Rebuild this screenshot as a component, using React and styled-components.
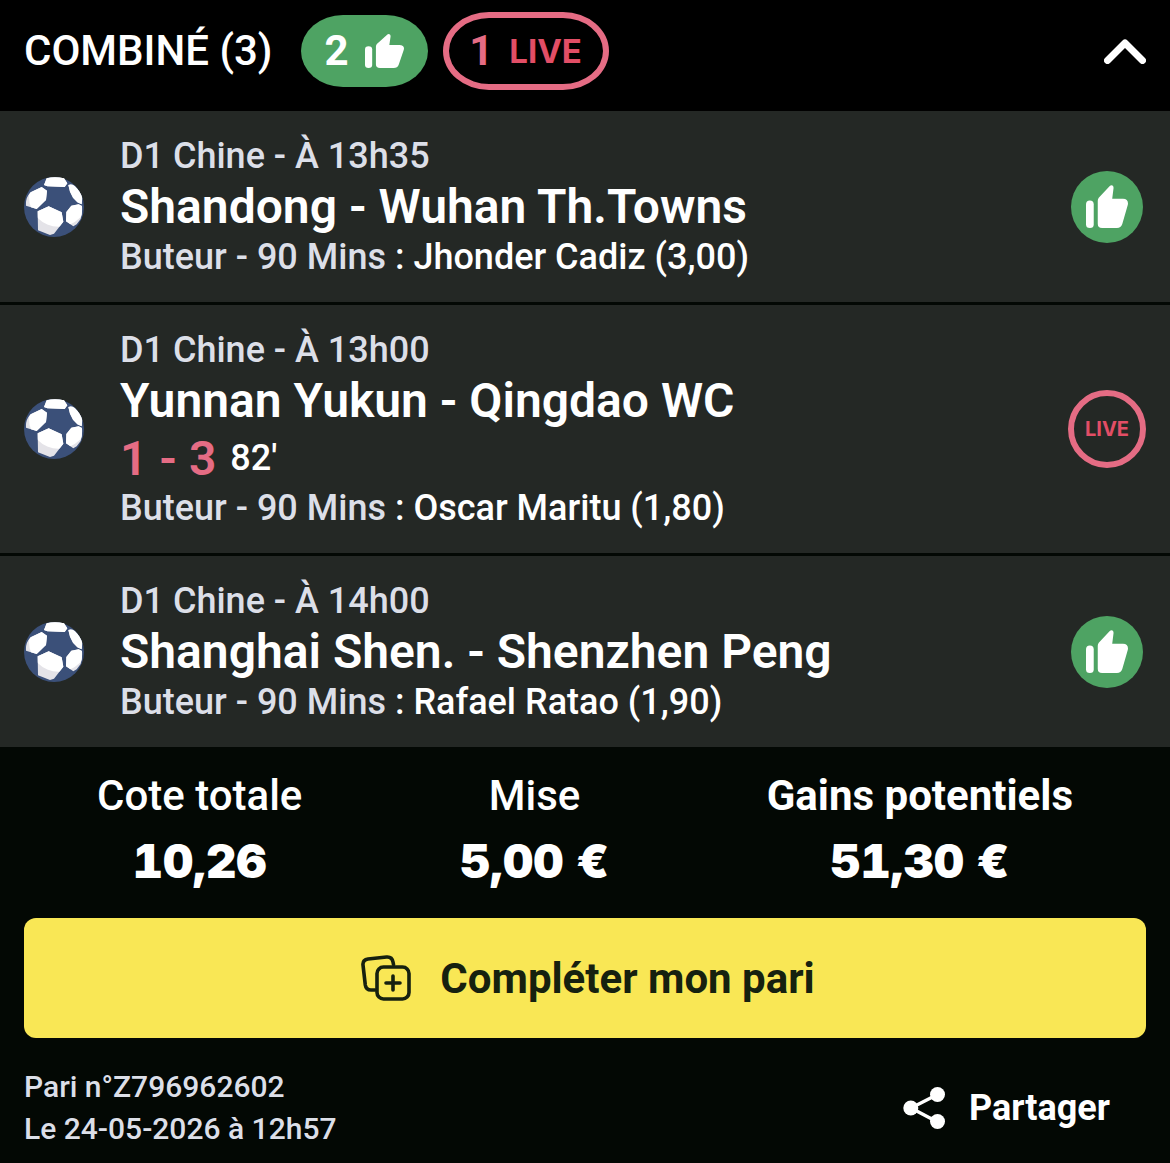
import React from "react";
import styled, { createGlobalStyle } from "styled-components";

const GlobalStyle = createGlobalStyle`
  * {
    box-sizing: border-box;
  }
  body {
    margin: 0;
    background: #030804;
    color: #fff;
    font-family: Roboto, "Liberation Sans", sans-serif;
  }
  button {
    border: 0;
    padding: 0;
    background: none;
    color: inherit;
    font-family: inherit;
    cursor: pointer;
  }
  h1, h2, p, ul, dl, dd {
    margin: 0;
    padding: 0;
  }
  svg {
    display: block;
    flex-shrink: 0;
  }
`;

const Header = styled.header`
  display: flex;
  align-items: center;
  height: 111px;
  padding: 0 24px 10px;
  background: #000;
`;

const Heading = styled.h1`
  margin-right: 28px;
  font-size: 42px;
  font-weight: 500;
  line-height: 48px;
`;

const Pill = styled.span`
  display: flex;
  align-items: center;
  justify-content: center;
  font-size: 42px;
  font-weight: 700;
`;

const WonPill = styled(Pill)`
  gap: 16px;
  width: 127px;
  height: 72px;
  margin-right: 15px;
  border-radius: 42px / 36px;
  background: #4ea363;
`;

const LivePill = styled(Pill)`
  gap: 16px;
  width: 166px;
  height: 78px;
  border: 6px solid #e56c84;
  border-radius: 46px / 39px;
  color: #e56c84;
`;

const LiveText = styled.span`
  color: #e24e66;
  font-family: Inter, sans-serif;
  font-size: ${({ $small }) => ($small ? "20px" : "33px")};
  font-weight: 700;
`;

const Toggle = styled.button`
  margin-left: auto;
`;

const BetList = styled.ul`
  display: grid;
  gap: 3px;
  list-style: none;
`;

const BetRow = styled.li`
  display: flex;
  align-items: center;
  padding: 24px;
  background: #242825;
`;

const BetInfo = styled.div`
  flex: 1;
  margin-left: 36px;
`;

const Meta = styled.p`
  color: #dcdfe8;
  font-size: 36px;
  font-weight: 500;
  line-height: 42px;
`;

const Pick = styled.span`
  color: #fff;
`;

const Teams = styled.h2`
  font-size: 48px;
  font-weight: 600;
  line-height: 59px;
`;

const Score = styled.p`
  display: flex;
  align-items: center;
  gap: 14px;
  font-size: 36px;
  font-weight: 500;
  line-height: 57px;

  strong {
    color: #e56c84;
    font-size: 48px;
    font-weight: 600;
  }
`;

const StatusSlot = styled.div`
  display: flex;
  justify-content: center;
  width: 78px;
`;

const Badge = styled.span`
  display: flex;
  align-items: center;
  justify-content: center;
  width: ${({ $live }) => ($live ? "78px" : "72px")};
  height: ${({ $live }) => ($live ? "78px" : "72px")};
  border: ${({ $live }) => ($live ? "6px solid #e56c84" : "0")};
  border-radius: 50%;
  background: ${({ $live }) => ($live ? "none" : "#4ea363")};
`;

const Totals = styled.dl`
  display: flex;
  justify-content: space-between;
  padding: 24px 97px 0;
  text-align: center;
`;

const Label = styled.dt`
  font-size: 42px;
  font-weight: ${({ $strong }) => ($strong ? 700 : 500)};
  line-height: 50px;
`;

const Amount = styled.dd`
  font-family: Inter, sans-serif;
  font-size: 47px;
  font-weight: 900;
  font-variant-numeric: tabular-nums;
  line-height: 56px;
  padding-top: 12px;
`;

const CompleteButton = styled.button`
  && {
    display: flex;
    align-items: center;
    justify-content: center;
    gap: 29px;
    width: calc(100% - 48px);
    height: 120px;
    margin: 29px 24px 0;
    padding-left: 6px;
    border-radius: 12px;
    background: #f9e755;
    color: #16210f;
    font-size: 42px;
    font-weight: 700;
  }
`;

const Footer = styled.footer`
  display: flex;
  align-items: center;
  justify-content: space-between;
  padding: 28px 60px 13px 24px;
`;

const Reference = styled.p`
  color: #dcdfe8;
  font-size: 30px;
  font-weight: 500;
  line-height: 42px;
`;

const ShareButton = styled.button`
  && {
    display: flex;
    align-items: center;
    gap: 24px;
    font-size: 36px;
    font-weight: 700;
  }
`;

const ThumbIcon = ({ width, height }) => (
  <svg
    width={width}
    height={height}
    viewBox="0 0 125 128"
    preserveAspectRatio="none"
    fill="#fff"
    aria-hidden="true"
  >
    <rect y="46" width="23" height="82" rx="11.5" />
    <path d="M35 47Q35 42 38 38L70 4Q75-2 80 2Q82 4 82 9L78 41H110Q125 41 125 55Q125 58 123 64L108 116Q104 128 92 128H48Q35 128 35 115Z" />
  </svg>
);

const BallIcon = () => (
  <svg width="60" height="60" viewBox="0 0 180 180" aria-hidden="true">
    <defs>
      <clipPath id="patches">
        <path d="M60 24L68 4Q92-3 120 4L130 19L122 30L70 28Z" />
        <path d="M53 30L69 41L66 69L38 96L6 86Q4 62 20 46Z" />
        <path d="M133 24Q142 20 152 27Q170 44 175 64L173 82L160 76L147 62L138 44Z" />
        <path d="M164 82L174 87Q176 106 170 126L158 142L148 148L126 133L127 105L142 86Z" />
        <path d="M74 88L113 106L118 134L90 170L78 174L42 160L41 103Z" />
      </clipPath>
    </defs>
    <circle cx="90" cy="90" r="90" fill="#3b5079" />
    <g clipPath="url(#patches)">
      <rect width="180" height="180" fill="#e4e3e8" />
      <circle cx="104" cy="60" r="89" fill="#fff" />
    </g>
  </svg>
);

const ChevronIcon = () => (
  <svg width="42" height="26" viewBox="0 0 42 26" aria-hidden="true">
    <path
      d="M3.500 22.500L21 5L38.500 22.500"
      fill="none"
      stroke="#fff"
      strokeWidth="7"
      strokeLinecap="round"
      strokeLinejoin="round"
    />
  </svg>
);

const CardsIcon = () => (
  <svg
    width="50"
    height="46"
    viewBox="0 0 50 46"
    fill="none"
    stroke="#16210f"
    strokeWidth="3.6"
    strokeLinecap="round"
    strokeLinejoin="round"
    aria-hidden="true"
  >
    <rect x="16" y="12" width="32" height="32" rx="6.500" />
    <path d="M32.500 9.500L32 7Q31 1.500 25.500 2L7 4Q1.500 4.800 2 10L4.300 30Q5 35 10 35H14" />
    <path d="M32 21V35M25 28H39" />
  </svg>
);

const ShareIcon = () => (
  <svg width="42" height="42" viewBox="0 0 42 42" aria-hidden="true">
    <path d="M34.500 7.500L8 21L34.500 35" fill="none" stroke="#fff" strokeWidth="3.4" />
    <circle cx="34.500" cy="7.500" r="7.500" fill="#fff" />
    <circle cx="7.800" cy="21" r="7.500" fill="#fff" />
    <circle cx="34.500" cy="34.500" r="7.500" fill="#fff" />
  </svg>
);

const bets = [
  {
    meta: "D1 Chine - À 13h35",
    teams: "Shandong - Wuhan Th.Towns",
    pick: "Jhonder Cadiz (3,00)",
  },
  {
    meta: "D1 Chine - À 13h00",
    teams: "Yunnan Yukun - Qingdao WC",
    score: "1 - 3",
    minute: "82'",
    pick: "Oscar Maritu (1,80)",
  },
  {
    meta: "D1 Chine - À 14h00",
    teams: "Shanghai Shen. - Shenzhen Peng",
    pick: "Rafael Ratao (1,90)",
  },
];

const Bet = ({ bet }) => {
  const live = Boolean(bet.score);
  return (
    <BetRow>
      <BallIcon />
      <BetInfo>
        <Meta>{bet.meta}</Meta>
        <Teams>{bet.teams}</Teams>
        {live ? (
          <Score>
            <strong>{bet.score}</strong>
            <span>{bet.minute}</span>
          </Score>
        ) : null}
        <Meta>
          Buteur - 90 Mins <Pick>: {bet.pick}</Pick>
        </Meta>
      </BetInfo>
      <StatusSlot>
        <Badge $live={live}>
          {live ? <LiveText $small>LIVE</LiveText> : <ThumbIcon width={42} height={43} />}
        </Badge>
      </StatusSlot>
    </BetRow>
  );
};

const App = () => (
  <>
    <GlobalStyle />
    <Header>
      <Heading>COMBINÉ (3)</Heading>
      <WonPill>
        2 <ThumbIcon width={39} height={34} />
      </WonPill>
      <LivePill>
        1 <LiveText>LIVE</LiveText>
      </LivePill>
      <Toggle type="button" aria-label="Réduire">
        <ChevronIcon />
      </Toggle>
    </Header>
    <main>
      <BetList>
        {bets.map((bet) => (
          <Bet key={bet.teams} bet={bet} />
        ))}
      </BetList>
      <Totals>
        <div>
          <Label>Cote totale</Label>
          <Amount>10,26</Amount>
        </div>
        <div>
          <Label>Mise</Label>
          <Amount>5,00 €</Amount>
        </div>
        <div>
          <Label $strong>Gains potentiels</Label>
          <Amount>51,30 €</Amount>
        </div>
      </Totals>
      <CompleteButton type="button">
        <CardsIcon />
        Compléter mon pari
      </CompleteButton>
    </main>
    <Footer>
      <Reference>
        Pari n°Z796962602
        <br />
        Le 24-05-2026 à 12h57
      </Reference>
      <ShareButton type="button">
        <ShareIcon />
        Partager
      </ShareButton>
    </Footer>
  </>
);

export default App;
